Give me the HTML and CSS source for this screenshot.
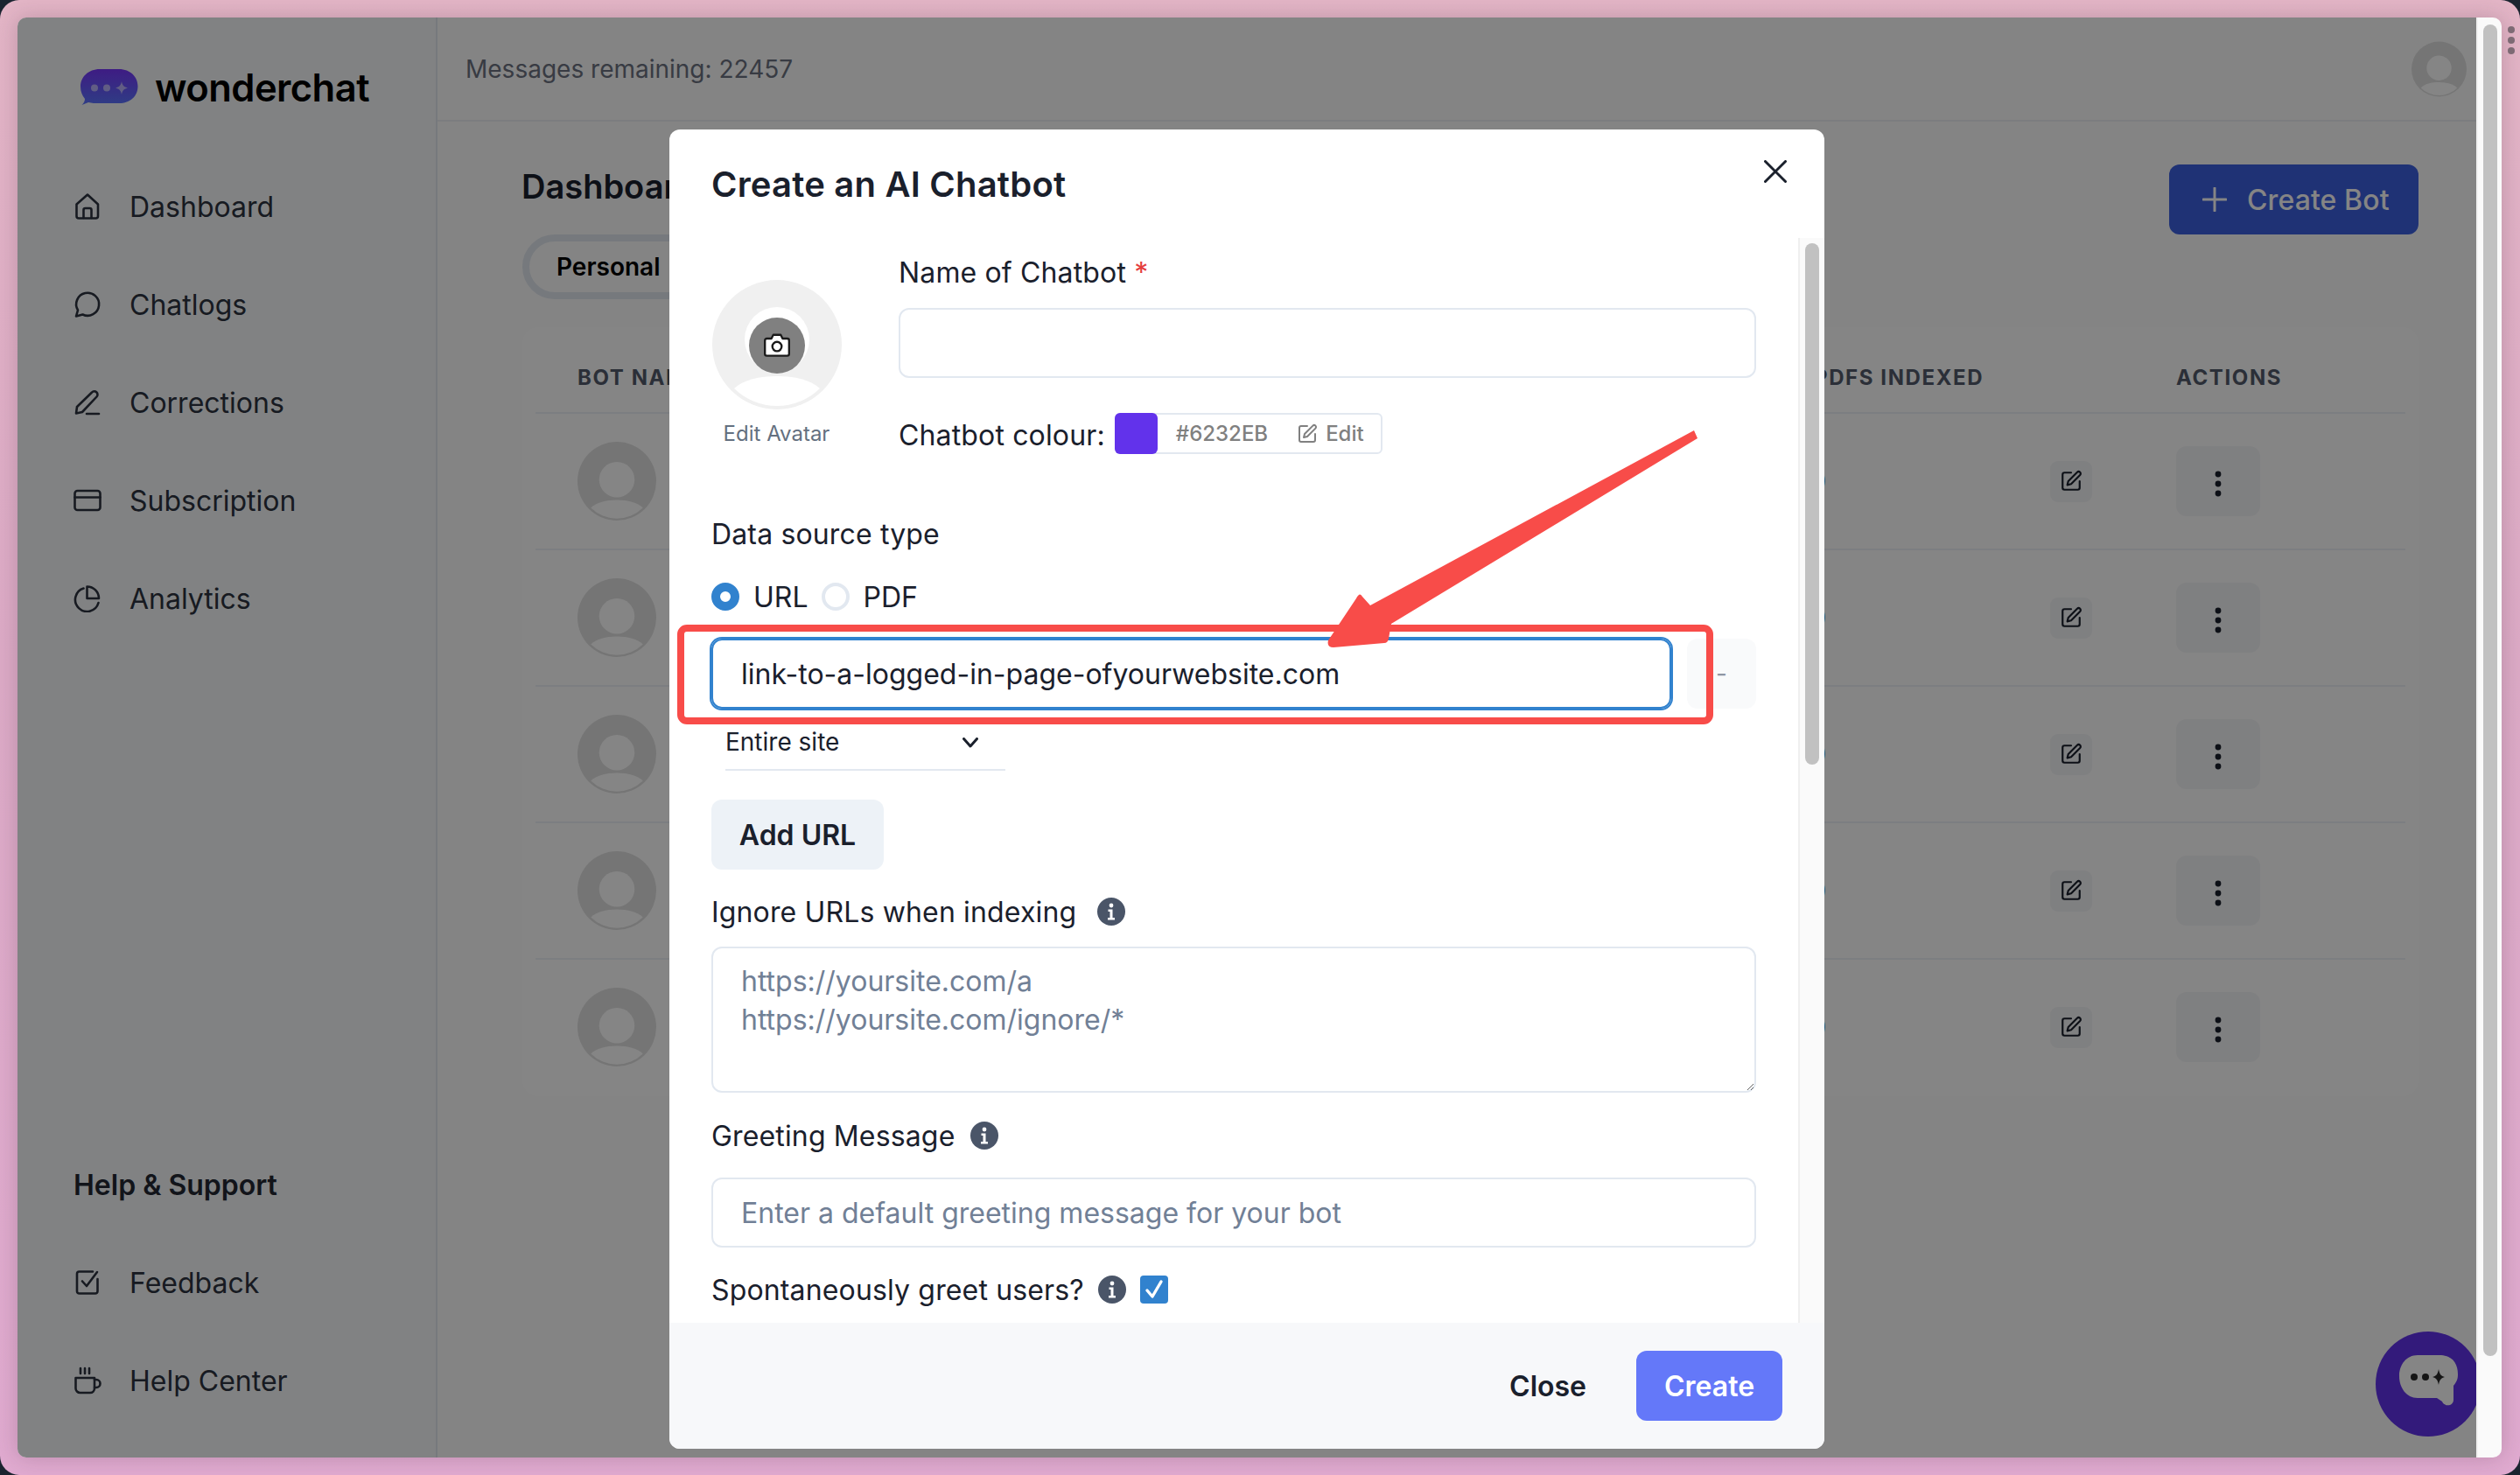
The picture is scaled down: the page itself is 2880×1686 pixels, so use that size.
FILE: index.html
```html
<!DOCTYPE html>
<html lang="en">
<head>
<meta charset="utf-8">
<title>wonderchat</title>
<link rel="stylesheet" href="styles.css">
</head>
<body>
<svg class="defs" width="0" height="0" aria-hidden="true">
  <defs>
    <linearGradient id="logoGrad" x1="0" y1="0" x2="0" y2="1"><stop offset="0" stop-color="#7736fc"/><stop offset="1" stop-color="#5a75ff"/></linearGradient>
    <symbol id="avatar" viewBox="0 0 100 100">
      <circle cx="50" cy="50" r="50" fill="#e1e1e1"/>
      <circle cx="50" cy="48" r="22.500" fill="#fff"/>
      <path d="M17 84C24 77 36 74 50 74C64 74 76 77 83 84A47 47 0 0 1 17 84Z" fill="#fff"/>
    </symbol>
    <symbol id="penSquare" viewBox="0 0 24 24"><path d="M12 3H5a2 2 0 0 0-2 2v14a2 2 0 0 0 2 2h14a2 2 0 0 0 2-2v-7" fill="none" stroke="currentColor" stroke-width="2" stroke-linecap="round" stroke-linejoin="round"/><path d="M18.400 2.600a2.100 2.100 0 1 1 3 3L12 15l-4 1 1-4Z" fill="none" stroke="currentColor" stroke-width="2" stroke-linecap="round" stroke-linejoin="round"/></symbol>
    <symbol id="kebab" viewBox="0 0 12 36"><circle cx="6" cy="6" r="3.400"/><circle cx="6" cy="17" r="3.400"/><circle cx="6" cy="28" r="3.400"/></symbol>
    <symbol id="info" viewBox="0 0 32 32"><circle cx="16" cy="16" r="16" fill="#4a5568"/><circle cx="16" cy="9" r="2.400" fill="#fff"/><path d="M12.500 13.500h5v9.500h2.500v2.500h-8V23h2.500v-7h-2Z" fill="#fff"/></symbol>
  </defs>
</svg>

<div class="desktop">
  <div class="window">
    <div class="app">
      <aside class="sidebar">
        <div class="brand">
          <svg class="brand-mark" viewBox="0 0 66 42"><path d="M22 0H44C57 0 65.500 9 65.500 19.500C65.500 31 57 39 44 39H20C17 39 13 39 9 38L1.500 41C4 39 5 36 5 34C2 30 0 26 0 20C0 9 9 0 22 0Z" fill="url(#logoGrad)"/><circle cx="16" cy="21.500" r="4" fill="#fff" opacity=".55"/><circle cx="30" cy="21.500" r="4" fill="#fff" opacity=".55"/><path d="M47 14C48 19 50 20.500 54 21.500C50 22.500 48 24 47 29C46 24 44 22.500 40 21.500C44 20.500 46 19 47 14Z" fill="#fff" opacity=".55"/></svg>
          <span class="brand-name">wonderchat</span>
        </div>
        <nav class="nav">
          <a class="nav-item"><svg class="nav-icon" viewBox="0 0 32 32"><path d="M3.500 13.500L16 2.500L28 13.500V27a2.500 2.500 0 0 1-2.500 2.500H6A2.500 2.500 0 0 1 3.500 27Z"/><path d="M11.500 29V20a2 2 0 0 1 2-2h5a2 2 0 0 1 2 2v9"/></svg>Dashboard</a>
          <a class="nav-item"><svg class="nav-icon" viewBox="0 0 32 32"><path d="M3 29.500L5 22.500A13 13 0 1 1 10.500 27.500Z"/></svg>Chatlogs</a>
          <a class="nav-item"><svg class="nav-icon" viewBox="0 0 32 32"><path d="M3 28.500L4 21L21 4.500a3.500 3.500 0 0 1 5.500 5L10 27Z"/><path d="M15 29H29"/></svg>Corrections</a>
          <a class="nav-item"><svg class="nav-icon" viewBox="0 0 32 32"><rect x="1.500" y="5" width="29" height="22" rx="3"/><path d="M1.500 12.500H30.500"/></svg>Subscription</a>
          <a class="nav-item"><svg class="nav-icon" viewBox="0 0 32 32"><path d="M11.500 4.500A13.500 13.500 0 1 0 28.500 21"/><path d="M15.500 2.500A13.500 13.500 0 0 1 29 16H15.500Z"/></svg>Analytics</a>
        </nav>
        <div class="help">
          <h3 class="help-title">Help &amp; Support</h3>
          <a class="nav-item"><svg class="nav-icon" viewBox="0 0 32 32"><path d="M22 3.500H6.500a2.500 2.500 0 0 0-2.500 2.500V26a2.500 2.500 0 0 0 2.500 2.500H25a2.500 2.500 0 0 0 2.500-2.500V12"/><path d="M10 14.500L15 20L27 4"/></svg>Feedback</a>
          <a class="nav-item"><svg class="nav-icon" viewBox="0 0 32 32"><path d="M2.500 13H24V25a5 5 0 0 1-5 5H7.500a5 5 0 0 1-5-5Z"/><path d="M24 15h2a4.500 4.500 0 0 1 0 9h-2"/><path d="M8 2V8M13 2V8M18 2V8"/></svg>Help Center</a>
        </div>
      </aside>

      <div class="main">
        <header class="topbar">
          <span class="remaining">Messages remaining: 22457</span>
          <svg class="user-avatar"><use href="#avatar"/></svg>
        </header>
        <section class="content">
          <div class="page-head">
            <h1 class="page-title">Dashboard</h1>
            <button class="create-bot"><svg class="plus" viewBox="0 0 28 28"><path d="M14 1V27M1 14H27"/></svg>Create Bot</button>
          </div>
          <div class="tabs"><span class="tab">Personal</span></div>
          <div class="table-card">
            <div class="tr th">
              <span>BOT NAME</span><span>PDFS INDEXED</span><span></span><span>ACTIONS</span>
            </div>
            <div class="tr"><svg class="bot-avatar"><use href="#avatar"/></svg><span class="count">0</span><button class="edit-btn"><svg><use href="#penSquare"/></svg></button><button class="more-btn"><svg><use href="#kebab"/></svg></button></div>
            <div class="tr"><svg class="bot-avatar"><use href="#avatar"/></svg><span class="count">0</span><button class="edit-btn"><svg><use href="#penSquare"/></svg></button><button class="more-btn"><svg><use href="#kebab"/></svg></button></div>
            <div class="tr"><svg class="bot-avatar"><use href="#avatar"/></svg><span class="count">0</span><button class="edit-btn"><svg><use href="#penSquare"/></svg></button><button class="more-btn"><svg><use href="#kebab"/></svg></button></div>
            <div class="tr"><svg class="bot-avatar"><use href="#avatar"/></svg><span class="count">0</span><button class="edit-btn"><svg><use href="#penSquare"/></svg></button><button class="more-btn"><svg><use href="#kebab"/></svg></button></div>
            <div class="tr"><svg class="bot-avatar"><use href="#avatar"/></svg><span class="count">0</span><button class="edit-btn"><svg><use href="#penSquare"/></svg></button><button class="more-btn"><svg><use href="#kebab"/></svg></button></div>
          </div>
        </section>
        <svg class="launcher" viewBox="0 0 120 120"><circle cx="60" cy="60" r="60" fill="#6232eb"/><path d="M48 27H73C88 27 94 37 94 49C94 54 93 57 89 62V78C89 86 78 86 76 80L70 76H48C35 76 27 64 27 51C27 38 35 27 48 27Z" fill="#fff"/><circle cx="44" cy="52" r="4" fill="#2a2a2a"/><circle cx="57" cy="52" r="4" fill="#2a2a2a"/><path d="M72 43C73 49 75 51 79 52C75 53 73 55 72 61C71 55 69 53 65 52C69 51 71 49 72 43Z" fill="#2a2a2a"/></svg>
      </div>

      <div class="scrim"></div>

      <div class="modal">
        <header class="modal-head">
          <h2 class="modal-title">Create an AI Chatbot</h2>
          <svg class="modal-x" viewBox="0 0 26 26"><path d="M1.500 1.500L24.500 24.500M24.500 1.500L1.500 24.500"/></svg>
        </header>
        <div class="modal-body">
          <div class="form">
            <div class="identity">
              <div class="avatar-col">
                <div class="avatar-wrap">
                  <svg class="avatar-big" viewBox="0 0 148 148"><circle cx="74" cy="74" r="74" fill="#f0f0f0"/><circle cx="74" cy="68" r="37" fill="#fff"/><path d="M25 124C36 114 54 110 74 110C94 110 112 114 123 124A70 70 0 0 1 25 124Z" fill="#fff"/></svg>
                  <span class="camera"><svg viewBox="0 0 32 32"><path d="M3 10.500a2 2 0 0 1 2-2h5L12 4.500h8l2 4h5a2 2 0 0 1 2 2V25a2 2 0 0 1-2 2H5a2 2 0 0 1-2-2Z" fill="#fff" stroke="#1a1a1a" stroke-width="2.200" stroke-linejoin="round"/><circle cx="16" cy="17" r="5" fill="#fff" stroke="#1a1a1a" stroke-width="2.200"/></svg></span>
                </div>
                <span class="avatar-caption">Edit Avatar</span>
              </div>
              <div class="identity-fields">
                <label class="label">Name of Chatbot <span class="req">*</span></label>
                <div class="field name-field"></div>
                <div class="colour-row">
                  <span class="label colour-label">Chatbot colour:</span>
                  <div class="colour-picker">
                    <span class="swatch"></span>
                    <span class="hex">#6232EB</span>
                    <span class="colour-edit"><svg><use href="#penSquare"/></svg>Edit</span>
                  </div>
                </div>
              </div>
            </div>

            <div class="label source-label">Data source type</div>
            <div class="radios">
              <span class="radio on"></span><span class="radio-text">URL</span>
              <span class="radio"></span><span class="radio-text">PDF</span>
            </div>
            <div class="url-row">
              <div class="field url-field">link-to-a-logged-in-page-ofyourwebsite.com</div>
              <div class="url-remove">-</div>
            </div>
            <div class="select">Entire site<svg viewBox="0 0 18 12"><path d="M1.500 1.500L9 10L16.500 1.500"/></svg></div>
            <button class="add-url">Add URL</button>

            <div class="label ignore-label">Ignore URLs when indexing<svg class="info"><use href="#info"/></svg></div>
            <div class="field textarea">https://yoursite.com/a<br>https://yoursite.com/ignore/*</div>

            <div class="label greet-label">Greeting Message<svg class="info"><use href="#info"/></svg></div>
            <div class="field greet-field">Enter a default greeting message for your bot</div>

            <div class="label spont-label">Spontaneously greet users?<svg class="info"><use href="#info"/></svg>
              <span class="checkbox"><svg viewBox="0 0 32 32"><path d="M8 17L14 24L24 7"/></svg></span>
            </div>
          </div>
          <div class="modal-scroll"><span class="modal-thumb"></span></div>
        </div>
        <footer class="modal-foot">
          <button class="btn-close">Close</button>
          <button class="btn-create">Create</button>
        </footer>
      </div>
    </div>
    <div class="page-scroll"><span class="page-thumb"></span></div>
  </div>

  <div class="window-dots"><i></i><i></i><i></i></div>

  <svg class="annotation" viewBox="0 0 2880 1686">
    <rect class="frame" x="778" y="718" width="1176" height="106" rx="7"/>
    <path class="arrow" d="M1936 492L1940 501L1590 713L1587 730Q1586 735 1582 735L1524 740Q1516 740 1518 732L1550 684Q1554 676 1557 682L1566 692Z"/>
  </svg>
</div>
</body>
</html>
```

FILE: styles.css
```css
* { box-sizing: border-box; }
html, body { margin: 0; padding: 0; background: #1b2430; }
body { width: 2880px; height: 1686px; overflow: hidden; font-family: Inter, "Liberation Sans", sans-serif; color: #1a202c; }
h1, h2, h3 { margin: 0; }
button { font-family: inherit; border: 0; padding: 0; }
.defs { position: absolute; }

.desktop {
  position: relative; width: 2880px; height: 1686px; padding: 20px 21px 20px 20px;
  border-radius: 22px; display: flex;
  background: linear-gradient(180deg, #e3b5c6 0%, #dcaac6 45%, #e0aad0 100%);
}
.window {
  flex: 1; display: flex; border-radius: 10px; overflow: hidden;
  box-shadow: 0 0 24px rgba(60, 30, 50, .22);
}
.app { position: relative; flex: 1; display: flex; overflow: hidden; min-width: 0; }

.sidebar {
  width: 480px; flex: none; display: flex; flex-direction: column;
  background: #f7fafb; border-right: 2px solid #e2e8f0; padding: 0 0 32px 64px;
}
.brand { height: 160px; display: flex; align-items: center; gap: 19px; padding-left: 8px; }
.brand-mark { width: 66px; height: 42px; flex: none; overflow: visible; }
.brand-name { font-size: 43.500px; font-weight: 600; color: #000; letter-spacing: -.55px; }
.nav { display: flex; flex-direction: column; }
.nav-item { height: 112px; display: flex; align-items: center; gap: 32px; font-size: 32px; color: #2d3340; }
.nav-icon { width: 32px; height: 32px; flex: none; fill: none; stroke: currentColor; stroke-width: 2.600; stroke-linecap: round; stroke-linejoin: round; }
.help { margin-top: auto; }
.help-title { height: 112px; display: flex; align-items: center; font-size: 32px; font-weight: 600; color: #232833; }

.main { position: relative; flex: 1; display: flex; flex-direction: column; background: #fdfdfd; min-width: 0; }
.topbar {
  height: 119px; flex: none; display: flex; align-items: center; justify-content: space-between;
  padding: 0 11px 0 32px; border-bottom: 2px solid #edf0f3;
}
.remaining { font-size: 28px; color: #6b7280; }
.user-avatar { width: 63px; height: 64px; }

.content { padding: 49px 66px 0 97px; }
.page-head { display: flex; justify-content: space-between; align-items: flex-start; height: 80px; }
.page-title { font-size: 38px; line-height: 50px; font-weight: 600; color: #1a202c; margin-left: -1px; }
.create-bot {
  width: 285px; height: 80px; border-radius: 12px; background: #3c60e1; color: #fff; letter-spacing: .1px;
  display: flex; align-items: center; gap: 23px; padding-left: 38px; font-size: 32px; font-weight: 500;
}
.plus { width: 28px; height: 28px; flex: none; fill: none; stroke: currentColor; stroke-width: 3; stroke-linecap: round; }
.tabs { display: flex; height: 74px; }
.tab {
  width: 400px; height: 74px; border: 8px solid #e2e8f0; border-radius: 37px; padding-left: 31px;
  display: flex; align-items: center; font-size: 28px; font-weight: 600; color: #000;
}
.table-card { margin-top: 32px; background: #fff; border-radius: 18px; padding: 0 15px 2px; }
.tr {
  height: 156px; display: grid; grid-template-columns: 1413px 270px 144px 1fr; align-items: center;
  padding-left: 48px; border-top: 2px solid #edf2f7;
}
.tr.th { height: 97px; border-top: 0; padding-top: 18px; font-size: 24px; font-weight: 700; letter-spacing: 1.600px; color: #545b6b; white-space: nowrap; }
.bot-avatar { width: 90px; height: 90px; }
.count { font-size: 28px; font-weight: 500; color: #2b6cb0; margin-left: -4px; }
.edit-btn { width: 48px; height: 47px; border-radius: 9px; background: #f4f5f7; color: #1a202c; display: flex; align-items: center; justify-content: center; }
.edit-btn svg { width: 26px; height: 26px; }
.more-btn { width: 96px; height: 80px; border-radius: 12px; background: #f4f5f7; display: flex; align-items: center; justify-content: center; padding-top: 7px; }
.more-btn svg { width: 12px; height: 36px; fill: #1a202c; }
.launcher { position: absolute; right: -5px; bottom: 24px; width: 120px; height: 120px; }

.scrim { position: absolute; inset: 0; background: rgba(0, 0, 0, .48); }

.page-scroll { position: relative; width: 29px; flex: none; background: #fafafa; border-left: 2px solid #f1f1f1; }
.page-thumb { position: absolute; left: 6px; top: 8px; width: 16px; height: 1522px; border-radius: 8px; background: #c1c1c1; }
.window-dots { position: absolute; left: 2866px; top: 30px; display: flex; flex-direction: column; gap: 4px; }
.window-dots i { width: 8px; height: 8px; border-radius: 50%; background: #7d6a74; }

.modal {
  position: absolute; left: 745px; top: 128px; width: 1320px; height: 1508px; background: #fff;
  border-radius: 12px; display: flex; flex-direction: column; overflow: hidden;
}
.modal-head { position: relative; height: 124px; flex: none; display: flex; align-items: center; padding-left: 48px; }
.modal-title { font-size: 40px; font-weight: 600; color: #1a202c; letter-spacing: .2px; }
.modal-x { position: absolute; left: 1251px; top: 35px; width: 26px; height: 26px; fill: none; stroke: #1a202c; stroke-width: 3; stroke-linecap: round; }
.modal-body { flex: 1; display: flex; min-height: 0; overflow: hidden; }
.form { flex: 1; padding: 15px 48px 0 48px; min-width: 0; }
.modal-scroll { position: relative; width: 30px; flex: none; background: #fafafa; border-left: 2px solid #efefef; }
.modal-thumb { position: absolute; left: 6px; top: 6px; width: 16px; height: 596px; border-radius: 8px; background: #c1c1c1; }
.modal-foot { height: 144px; flex: none; background: #f7f8fa; display: flex; justify-content: flex-end; align-items: center; padding-right: 48px; }
.btn-close { height: 80px; padding: 0 32px; background: transparent; margin-right: 25px; font-size: 32px; font-weight: 600; color: #1a202c; }
.btn-create { width: 167px; height: 80px; border-radius: 12px; background: #6478f9; color: #fff; font-size: 32px; font-weight: 600; }

.label { display: flex; align-items: center; height: 48px; font-size: 32px; letter-spacing: .15px; color: #1a202c; white-space: pre; }
.req { color: #e53e3e; }
.field { border: 2px solid #e2e8f0; border-radius: 12px; font-size: 32px; }

.identity { display: flex; gap: 65px; }
.avatar-col { width: 149px; flex: none; display: flex; flex-direction: column; align-items: center; padding-top: 33px; }
.avatar-wrap { position: relative; width: 148px; height: 148px; }
.avatar-big { width: 148px; height: 148px; display: block; }
.camera { position: absolute; left: 42px; top: 43px; width: 64px; height: 64px; border-radius: 50%; background: #808080; display: flex; align-items: center; justify-content: center; }
.camera svg { width: 34px; height: 34px; }
.avatar-caption { margin-top: 10px; font-size: 24px; line-height: 36px; color: #647080; white-space: nowrap; }
.identity-fields { flex: 1; min-width: 0; }
.name-field { height: 80px; margin-top: 17px; }
.colour-row { display: flex; align-items: center; gap: 11px; margin-top: 40px; height: 47px; }
.colour-label { padding-top: 4px; }
.colour-picker { display: flex; align-items: center; width: 306px; height: 47px; border: 2px solid #e2e8f0; border-radius: 6px; }
.swatch { width: 49px; height: 47px; margin-left: -2px; border-radius: 6px; background: #6232eb; flex: none; }
.hex { margin-left: 21px; font-size: 24px; font-weight: 500; color: #808080; }
.colour-edit { display: flex; align-items: center; gap: 9px; margin-left: 33px; font-size: 24px; font-weight: 500; color: #808080; }
.colour-edit svg { width: 24px; height: 24px; }

.source-label { margin-top: 67px; }
.radios { display: flex; align-items: center; height: 48px; margin-top: 24px; }
.radio { width: 32px; height: 32px; border-radius: 50%; border: 4px solid #e2e8f0; flex: none; }
.radio.on { border: 10px solid #3182ce; background: #fff; }
.radio-text { font-size: 32px; margin: 0 15px 0 16px; }
.url-row { display: flex; gap: 18px; margin-top: 24px; height: 80px; }
.url-field { width: 1097px; height: 80px; border-color: #3182ce; box-shadow: 0 0 0 2px #3182ce; padding-left: 32px; display: flex; align-items: center; color: #1a202c; }
.url-remove { flex: 1; height: 80px; background: #f9fafb; border-radius: 12px; color: #8f96a3; font-size: 28px; display: flex; align-items: center; justify-content: center; }
.select { width: 320px; height: 60px; margin: 11px 0 0 16px; padding: 0 31px 4px 0; border-bottom: 2px solid #e2e8f0; display: flex; align-items: center; justify-content: space-between; font-size: 28px; }
.select svg { width: 18px; height: 12px; margin-top: 2px; fill: none; stroke: #1a202c; stroke-width: 3; stroke-linecap: round; stroke-linejoin: round; }
.add-url { display: block; width: 197px; height: 80px; margin-top: 33px; border-radius: 12px; background: #edf2f7; font-size: 32px; font-weight: 600; color: #1a202c; }
.ignore-label { margin-top: 24px; }
.info { width: 32px; height: 32px; flex: none; margin-left: 24px; }
.textarea { height: 167px; margin-top: 16px; padding: 16px 32px 0; line-height: 44px; color: #718096; resize: vertical; overflow: hidden; }
.greet-label { margin-top: 25px; }
.greet-label .info { margin-left: 18px; }
.greet-field { height: 80px; margin-top: 24px; padding-left: 32px; display: flex; align-items: center; color: #718096; }
.spont-label { margin-top: 24px; }
.spont-label .info { margin-left: 16px; }
.checkbox { width: 32px; height: 32px; margin-left: 16px; border-radius: 4px; background: #3182ce; flex: none; display: flex; }
.checkbox svg { width: 32px; height: 32px; fill: none; stroke: #fff; stroke-width: 3.400; stroke-linecap: round; stroke-linejoin: round; }

.annotation { position: absolute; left: 0; top: 0; width: 2880px; height: 1686px; pointer-events: none; }
.frame { fill: none; stroke: #f84c49; stroke-width: 8; }
.arrow { fill: #f84c49; }
```
